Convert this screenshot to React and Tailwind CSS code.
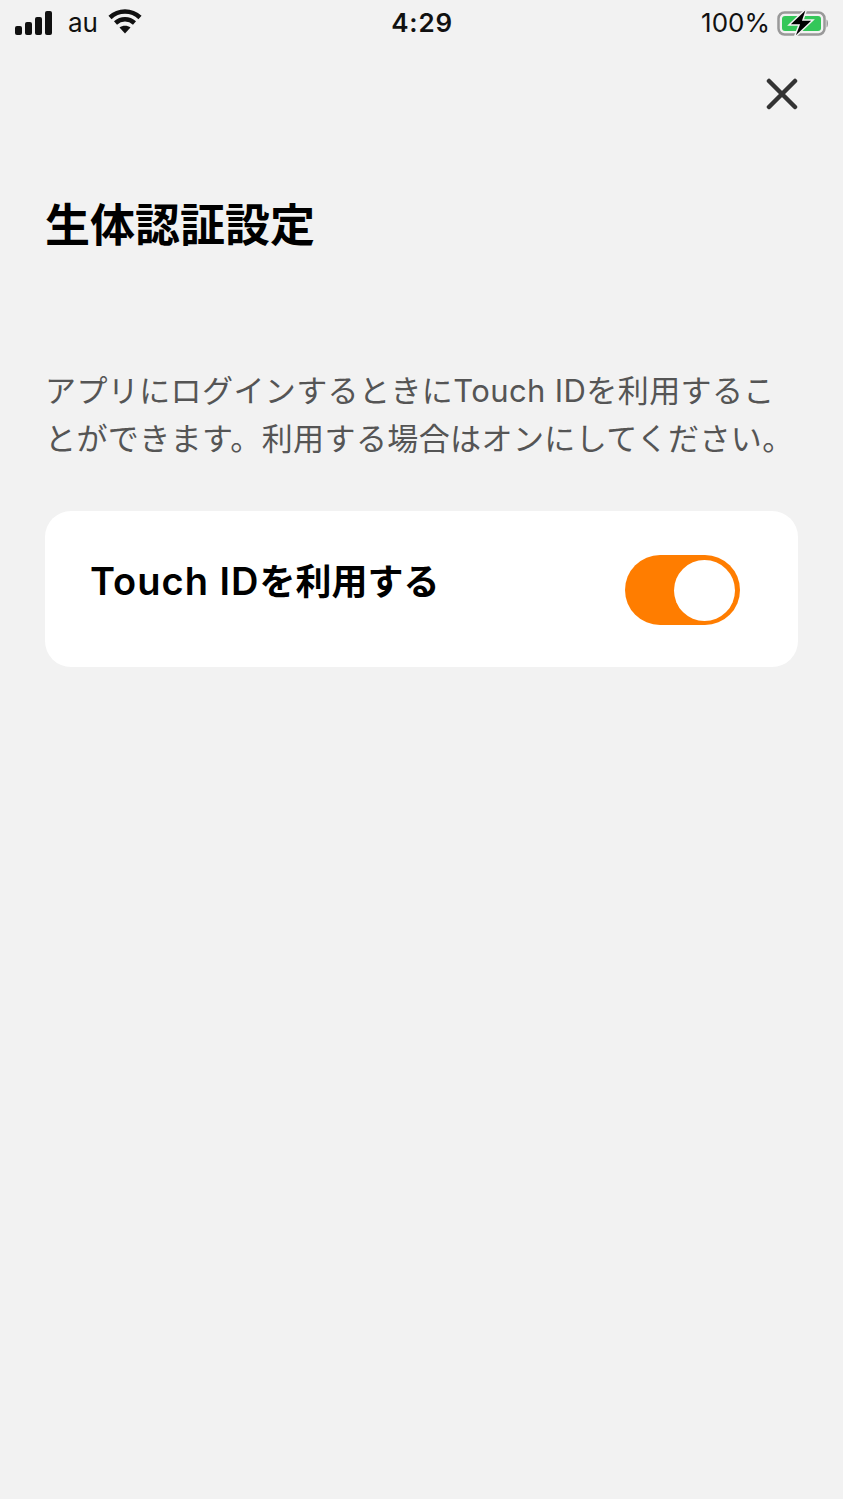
const font = { fontFamily: 'Inter, "Noto Sans CJK JP", sans-serif' };

function StatusBar() {
  return (
    <div className="flex h-[46px] items-center justify-between pl-[15px] pr-[14px] text-[#111]">
      <div className="flex w-[200px] items-center">
        <svg width="38" height="25" viewBox="0 0 38 25" fill="#111">
          <rect x="0" y="15" width="7" height="9" rx="2" />
          <rect x="10" y="11" width="7" height="13" rx="2" />
          <rect x="20" y="6" width="7" height="18" rx="2" />
          <rect x="30" y="0" width="7" height="24" rx="2" />
        </svg>
        <span className="ml-[15px] text-[26px] leading-none">au</span>
        <svg className="ml-[10px] mb-[4px]" width="34" height="25" viewBox="0 0 34 25" fill="none" stroke="#111" strokeWidth="4.5">
          <path d="M2 8.5C10.5 0.5 23.5 0.5 32 8.5" />
          <path d="M7.5 14C13 9 21 9 26.5 14" />
          <path d="M17 24.5L11.5 18.5C14.5 16 19.5 16 22.5 18.5Z" fill="#111" stroke="none" />
        </svg>
      </div>
      <span className="text-[26px] font-semibold leading-none tracking-[0.8px]">4:29</span>
      <div className="flex w-[200px] items-center justify-end">
        <span className="mr-[7px] text-[26px] leading-none">100%</span>
        <svg width="52" height="32" viewBox="0 0 52 32">
          <rect x="1.5" y="5.5" width="46" height="22" rx="6" fill="none" stroke="#999" strokeWidth="2.5" />
          <rect x="5" y="9" width="39" height="15" rx="3" fill="#34c759" />
          <path d="M49.5 12.5C51.5 13.5 51.5 19.5 49.5 20.5Z" fill="#999" />
          <path d="M30 1L12 18H22L17 31L36 13H26Z" fill="#000" stroke="#f2f2f2" strokeWidth="1.5" />
        </svg>
      </div>
    </div>
  );
}

export default function App() {
  return (
    <main className="flex h-[1499px] w-[843px] flex-col overflow-hidden bg-[#f2f2f2]" style={font}>
      <StatusBar />

      <div className="flex justify-end pr-[45px] pt-[32px]">
        <svg width="32" height="32" viewBox="0 0 32 32" stroke="#333" strokeWidth="4.5" strokeLinecap="round">
          <path d="M3 3L29 29M29 3L3 29" />
        </svg>
      </div>

      <div className="px-[45px]">
        <h1 className="mt-[85px] text-[45px] font-bold leading-[62px] text-black">生体認証設定</h1>

        <p className="mt-[110px] whitespace-nowrap text-[31px] leading-[48px] tracking-[0.4px] text-[#555]">
          アプリにログインするときにTouch IDを利用するこ
          <br />
          とができます。利用する場合はオンにしてください。
        </p>

        <section className="mt-[48px] flex h-[156px] w-[753px] items-center justify-between rounded-[26px] bg-white pl-[45px] pr-[58px]">
          <span className="mb-[16px] text-[36px] font-semibold leading-none text-black">
            <span className="text-[38px] tracking-[1px]">Touch ID</span>を利用する
          </span>
          <div className="mt-[2px] flex h-[70px] w-[115px] items-center justify-end rounded-full bg-[#ff7d00] pr-[5px]">
            <div className="h-[61px] w-[61px] rounded-full bg-white" />
          </div>
        </section>
      </div>
    </main>
  );
}
